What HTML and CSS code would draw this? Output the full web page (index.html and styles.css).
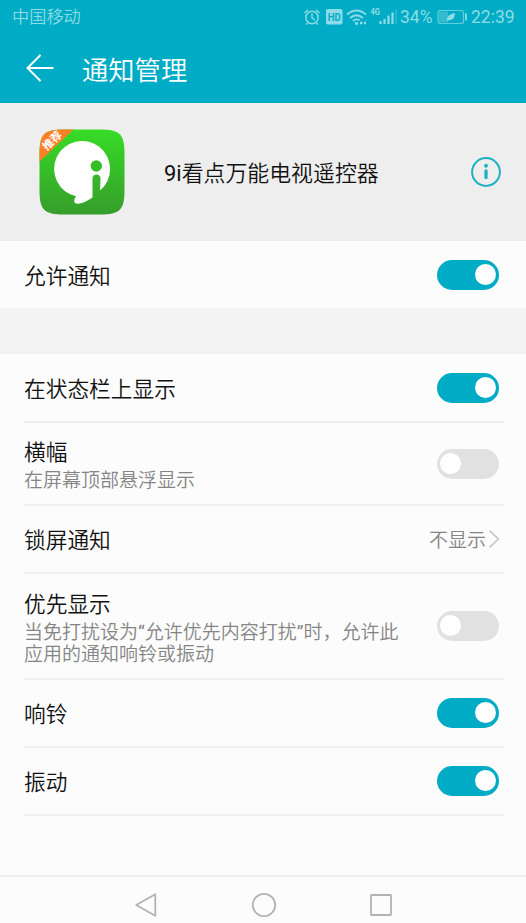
FILE: index.html
```
<!DOCTYPE html>
<html lang="zh-CN">

<head>
    <meta charset="UTF-8">
    <meta name="viewport" content="width=device-width, initial-scale=1.0">
    <title>通知管理</title>
    <link rel="stylesheet" href="styles.css">
</head>

<body>

    <header class="header">
        <div class="status-bar">
            <span class="carrier">中国移动</span>
            <div class="status-icons">
                <svg class="status-svg" width="97" height="24" viewBox="0 0 97 24" fill="none" stroke="currentColor">
                    <!-- alarm -->
                    <circle cx="9" cy="12.5" r="6.2" stroke-width="1.5" />
                    <path d="M9 8.5v4.5l3 2.2M1.5 8l3.5-3.2M16.5 8L13 4.8M4.5 18l-1.3 1.5M13.5 18l1.3 1.5" stroke-width="1.4" />
                    <!-- hd -->
                    <rect x="23" y="4" width="16.5" height="15.5" rx="2" fill="currentColor" stroke="none" />
                    <text x="31.3" y="15.6" class="hd-text" textLength="13" lengthAdjust="spacingAndGlyphs">HD</text>
                    <!-- wifi -->
                    <path d="M44 9.5q9.5-8 19 0M47 13q6.5-5.5 13 0M50 16q3.5-3 6.5-.5" stroke-width="1.7" />
                    <path d="M52 18.5h3M57 18h2.5M61 18h2" stroke-width="2.5" />
                    <!-- signal -->
                    <text x="67.5" y="10" class="net-text" textLength="9.5" lengthAdjust="spacingAndGlyphs">4G</text>
                    <path d="M77.5 19v-3M81.5 19v-5M85.5 19V10.5M89.5 19V7.5" stroke-width="2.2" />
                    <path d="M93 19V4.5" stroke-width="1.5" opacity=".35" />
                </svg>
                <span class="percent">34%</span>
                <svg class="battery" width="31" height="16" viewBox="0 0 31 16" fill="none" stroke="currentColor">
                    <rect x="1" y="1.5" width="25.5" height="13" rx="2" stroke-width="1.2" opacity=".7" />
                    <rect x="2" y="2.5" width="9" height="11" fill="currentColor" stroke="none" opacity=".35" />
                    <path d="M10 12q-.5-7 8-8q0 7.5-6 7.2z" fill="currentColor" stroke="none" />
                    <path d="M29 4.5v7" stroke-width="1.8" />
                </svg>
                <span class="clock">22:39</span>
            </div>
        </div>
        <div class="title-bar">
            <svg width="28" height="28" viewBox="0 0 28 28" fill="none" stroke="#fff" stroke-width="1.9">
                <path d="M14.5 1L1.5 14l13 13M1.5 14H27.5" />
            </svg>
            <h1>通知管理</h1>
        </div>
    </header>

    <section class="app-info">
        <svg class="app-icon" width="86" height="86" viewBox="0 0 86 86">
            <defs>
                <linearGradient id="green" x1="0" y1="0" x2="0" y2="1">
                    <stop offset="0" stop-color="#37dc26" />
                    <stop offset="1" stop-color="#369d2b" />
                </linearGradient>
                <clipPath id="shape">
                    <path d="M.5 25C.5 5 5 .5 25 .5H61C81 .5 85.500 5 85.500 25V61C85.500 81 81 85.500 61 85.500H25C5 85.500 .5 81 .5 61Z" />
                </clipPath>
            </defs>
            <g clip-path="url(#shape)">
                <rect width="86" height="86" fill="url(#green)" />
                <path d="M0 0H35L0 33Z" fill="#ff7f27" />
                <path d="M61 61.5A28 28 0 1 0 37 67.3Q34.5 71 35.5 73.5Q40 77.5 53.5 68.5V50Q53.5 45.5 57.5 45.5Q61.5 45.5 61.5 50Z" fill="#fff" />
                <circle cx="57.3" cy="37" r="5.7" fill="#36be28" />
            </g>
            <text class="badge-text" transform="translate(7.8 22) rotate(-43)">推荐</text>
        </svg>
        <h2><span class="latin">9i</span>看点万能电视遥控器</h2>
        <svg width="30" height="30" viewBox="0 0 30 30" fill="none" stroke="#1eb1c6">
            <circle cx="15" cy="15" r="13.9" stroke-width="2" />
            <circle cx="15" cy="8.8" r="2" fill="#1eb1c6" stroke="none" />
            <path d="M15 14v6.5" stroke-width="3.3" stroke-linecap="round" />
        </svg>
    </section>

    <div class="row row-main">
        <span class="label">允许通知</span>
        <span class="switch on"></span>
    </div>

    <main class="settings">
        <div class="row first">
            <span class="label">在状态栏上显示</span>
            <span class="switch on"></span>
        </div>
        <div class="row medium">
            <div class="text">
                <div class="label">横幅</div>
                <p>在屏幕顶部悬浮显示</p>
            </div>
            <span class="switch"></span>
        </div>
        <div class="row">
            <span class="label">锁屏通知</span>
            <div class="value">
                <span>不显示</span>
                <svg width="12" height="20" viewBox="0 0 12 20" fill="none" stroke="#c4c4c4" stroke-width="1.7">
                    <path d="M1.5 1.5L10.3 10l-8.8 8.5" />
                </svg>
            </div>
        </div>
        <div class="row tall">
            <div class="text">
                <div class="label">优先显示</div>
                <p>当免打扰设为<span class="latin">“</span>允许优先内容打扰<span class="latin">”</span>时，允许此应用的通知响铃或振动</p>
            </div>
            <span class="switch"></span>
        </div>
        <div class="row">
            <span class="label">响铃</span>
            <span class="switch on"></span>
        </div>
        <div class="row">
            <span class="label">振动</span>
            <span class="switch on"></span>
        </div>
    </main>

    <nav class="nav-bar">
        <svg width="24" height="26" viewBox="0 0 24 26">
            <path d="M21.3 2.2V23.8L2.2 13Z" />
        </svg>
        <svg width="26" height="26" viewBox="0 0 26 26">
            <circle cx="13" cy="13" r="11.2" />
        </svg>
        <svg width="24" height="26" viewBox="0 0 24 26">
            <rect x="2" y="3" width="20" height="20" rx=".5" />
        </svg>
    </nav>

</body>

</html>
```
FILE: styles.css
```
* {
    box-sizing: border-box;
}

body {
    font-family: Roboto, "Noto Sans CJK SC", sans-serif;
    font-weight: 350;
    background-color: #fcfcfc;
    color: #111;
    margin: 0;
    height: 923px;
    display: flex;
    flex-direction: column;
    overflow: hidden;
}

svg {
    display: block;
    flex: none;
}

h1, h2, p {
    margin: 0;
    font-weight: 350;
}

.latin {
    font-weight: 400;
}

/* Header */
.header {
    height: 103px;
    background-color: #00acc5;
    color: #fff;
}

.status-bar {
    height: 33px;
    padding: 0 11px 0 12px;
    display: flex;
    align-items: center;
    justify-content: space-between;
    color: #8ddbe6;
}

.carrier {
    font-size: 17.2px;
    line-height: 32px;
}

.status-icons {
    display: flex;
    align-items: center;
    font-size: 17.5px;
    font-weight: 400;
}

.percent {
    width: 33px;
    margin-right: 4px;
}

.battery {
    margin-right: 3px;
}

.clock {
    width: 44px;
}

.hd-text {
    font: bold 10px Roboto, sans-serif;
    text-anchor: middle;
    fill: #00acc5;
    stroke: none;
}

.net-text {
    font: bold 8.5px Roboto, sans-serif;
    fill: currentColor;
    stroke: none;
}

.title-bar {
    height: 70px;
    padding-left: 26px;
    display: flex;
    align-items: center;
    gap: 28px;
}

.title-bar h1 {
    padding-top: 5px;
    font-size: 26.3px;
    line-height: 40px;
}

/* App info */
.app-info {
    height: 138px;
    padding: 0 25px 0 39px;
    background-color: #eee;
    display: flex;
    align-items: center;
}

.app-icon {
    overflow: visible;
}

.app-info h2 {
    flex: 1;
    margin-left: 39px;
    padding-top: 4px;
    font-size: 21.9px;
    line-height: 32px;
}

.badge-text {
    font: bold 11px "Noto Sans CJK SC", sans-serif;
    fill: #fff;
}

/* Rows */
.row {
    height: 68px;
    padding-right: 5px;
    border-bottom: 2px solid #efefef;
    display: flex;
    align-items: center;
    justify-content: space-between;
}

.row-main {
    height: 67px;
    padding: 0 27px 0 24px;
    border-bottom: none;
}

.settings {
    flex: 1;
    padding: 0 22px 0 24px;
    border-top: 46px solid #f3f3f3;
}

.first {
    height: 69px;
}

.medium {
    height: 83px;
}

.tall {
    height: 106px;
}

.label {
    font-size: 21.7px;
    line-height: 30px;
}

.row > .label {
    padding-top: 4px;
}

.text {
    width: 380px;
    padding-top: 4px;
}

.text p {
    margin-top: 2px;
    font-size: 19px;
    line-height: 22.5px;
    color: #858585;
}

.value {
    margin-right: -1px;
    display: flex;
    align-items: center;
    gap: 2px;
    font-size: 19px;
    line-height: 28px;
    color: #858585;
}

.value span {
    padding-top: 4px;
}

.switch {
    flex: none;
    width: 62px;
    height: 30px;
    padding: 4px 3px;
    border-radius: 15px;
    background-color: #e1e1e1;
    display: flex;
}

.switch::before {
    content: "";
    width: 21px;
    height: 21px;
    border-radius: 50%;
    background-color: #fff;
}

.switch.on {
    background-color: #00acc5;
    justify-content: flex-end;
}

/* Navigation bar */
.nav-bar {
    height: 48px;
    padding: 9px 133px 0 134px;
    border-top: 2px solid #efefef;
    display: flex;
    align-items: center;
    justify-content: space-between;
}

.nav-bar svg {
    fill: none;
    stroke: #b3b3b3;
    stroke-width: 1.8;
    stroke-linejoin: round;
}
```
